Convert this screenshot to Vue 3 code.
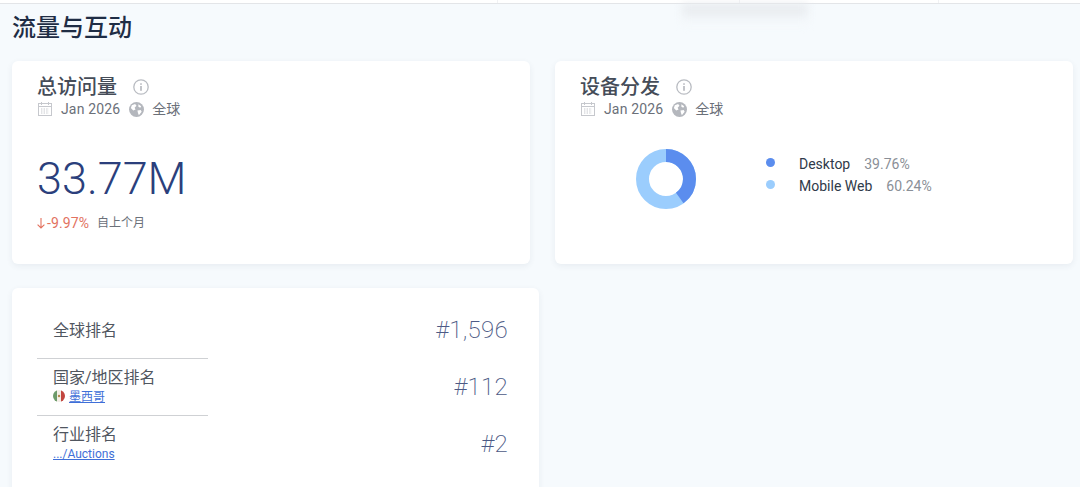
<script setup>
const cards = [
  { title: '总访问量' },
  { title: '设备分发' },
]
const ranks = [
  { label: '全球排名', value: '#1,596' },
  { label: '国家/地区排名', value: '#112', link: '墨西哥', flag: true },
  { label: '行业排名', value: '#2', link: '.../Auctions' },
]
const r = 23.5
const circ = 2 * Math.PI * r
const desktop = 39.76
const legend = [
  { name: 'Desktop', pct: '39.76%', color: '#5b8dee' },
  { name: 'Mobile Web', pct: '60.24%', color: '#9bcdfd' },
]
</script>

<template>
  <div class="page">
    <div class="topbar">
      <span style="width: 498px"></span>
      <span style="width: 242px"></span>
      <span style="width: 199px"></span>
    </div>
    <div class="smudge"></div>
    <h1 class="heading">流量与互动</h1>

    <div class="cards">
      <section v-for="(card, i) in cards" :key="card.title" class="card">
        <div class="title-row">
          <h2>{{ card.title }}</h2>
          <svg class="info" viewBox="0 0 16 16" width="16" height="16" fill="none">
            <circle cx="8" cy="8" r="7.2" stroke="#b9bcc2" stroke-width="1.3" />
            <rect x="7.3" y="7" width="1.4" height="4.8" fill="#a9acb3" />
            <rect x="7.3" y="4.3" width="1.4" height="1.5" fill="#a9acb3" />
          </svg>
        </div>
        <div class="meta">
          <svg class="cal" viewBox="0 0 14 14" width="14" height="14" fill="none">
            <rect x="0.5" y="1.5" width="13" height="12" stroke="#c6c8cd" />
            <path d="M1 4.5h12M3.5 0v3M10.5 0v3" stroke="#c6c8cd" />
            <path d="M3 7h8M3 9h8M3 11h8" stroke="#c6c8cd" stroke-dasharray="1.4 1.2" />
          </svg>
          <span class="date">Jan 2026</span>
          <svg class="globe" viewBox="0 0 16 16" width="15" height="15">
            <circle cx="8" cy="8" r="8" fill="#b4b7bd" />
            <path d="M3 3.5 6.5 2 8 4 6 6 7 8 4.5 9 2 6.5ZM9 9l3.5-.5 1 2-3 3.5-1-2.5ZM10 2.5l3 2-1 1.5-2-1Z" fill="#fff" />
          </svg>
          <span class="region">全球</span>
        </div>

        <div v-if="i === 0" class="visits">
          <div class="big">33.77M</div>
          <div class="change">
            <span class="down">
              <svg viewBox="0 0 8 11" width="8" height="11" fill="none">
                <path d="M4 0v10M0.6 6.6 4 10l3.4-3.4" stroke="#e2725f" stroke-width="1.1" />
              </svg>
              -9.97%
            </span>
            <span class="since">自上个月</span>
          </div>
        </div>

        <div v-else class="device">
          <svg class="donut" viewBox="0 0 60 60" width="60" height="60" fill="none">
            <circle cx="30" cy="30" :r="r" stroke="#9bcdfd" stroke-width="13" />
            <circle
              cx="30"
              cy="30"
              :r="r"
              stroke="#5b8dee"
              stroke-width="13"
              :stroke-dasharray="`${circ * desktop / 100} ${circ}`"
              transform="rotate(-90 30 30)"
            />
          </svg>
          <ul class="legend">
            <li v-for="item in legend" :key="item.name">
              <i :style="{ background: item.color }"></i>
              <span class="name">{{ item.name }}</span>
              <span class="pct">{{ item.pct }}</span>
            </li>
          </ul>
        </div>
      </section>
    </div>

    <section class="card rank-card">
      <div v-for="row in ranks" :key="row.label" class="rank-row">
        <div class="rank-left" :class="{ 'has-link': row.link }">
          <div class="rank-label">{{ row.label }}</div>
          <div v-if="row.link" class="rank-link">
            <svg v-if="row.flag" class="flag" viewBox="0 0 12 12" width="12" height="12">
              <clipPath id="flag-clip"><circle cx="6" cy="6" r="6" /></clipPath>
              <g clip-path="url(#flag-clip)">
                <rect width="4" height="12" fill="#6c9a6a" />
                <rect x="4" width="4" height="12" fill="#f3eee6" />
                <rect x="8" width="4" height="12" fill="#c2463f" />
                <circle cx="6" cy="6" r="1.2" fill="#b08a4a" />
              </g>
            </svg>
            <a href="#">{{ row.link }}</a>
          </div>
        </div>
        <div class="rank-value">{{ row.value }}</div>
      </div>
    </section>
  </div>
</template>

<style>
html,
body {
  margin: 0;
  background: #f6fafd;
  overflow: hidden;
}
</style>

<style scoped>
.page {
  position: relative;
  height: 487px;
  overflow: hidden;
  background: #f6fafd;
  font-family: Roboto, "Noto Sans CJK SC", sans-serif;
  color: #2f3a4a;
}

.topbar {
  display: flex;
  height: 3px;
  background: #fff;
  border-bottom: 1px solid #e3e5e8;
}

.topbar span {
  box-sizing: border-box;
  border-right: 1px solid #f1f2f4;
}

.smudge {
  position: absolute;
  left: 682px;
  top: 4px;
  width: 126px;
  height: 20px;
  background: linear-gradient(#e4e7eb, #f6fafd);
  filter: blur(4px);
}

.heading {
  position: relative;
  margin: 0;
  padding: 9px 0 0 12px;
  height: 48px;
  box-sizing: border-box;
  font-size: 24px;
  line-height: 30px;
  font-weight: 500;
  color: #1f2d45;
}

.cards {
  position: relative;
  display: grid;
  grid-template-columns: 518px 518px;
  gap: 25px;
  padding: 9px 0 0 12px;
}

.card {
  box-sizing: border-box;
  height: 203px;
  padding: 13px 25px 0;
  background: #fff;
  border-radius: 6px;
  box-shadow: 0 2px 6px rgba(40, 60, 90, 0.07);
}

.title-row {
  display: flex;
  align-items: center;
  gap: 16px;
  height: 26px;
}

.title-row h2 {
  margin: 0;
  font-size: 20px;
  line-height: 26px;
  font-weight: 500;
  color: #454c58;
}

.meta {
  display: flex;
  align-items: center;
  height: 18px;
  font-size: 14px;
  letter-spacing: 0.15px;
  color: #6b7079;
}

.cal {
  margin: 0 9px 0 1px;
}

.globe {
  margin: 0 8px 0 9px;
}

.region {
  margin-top: -2px;
}

.visits {
  padding-top: 34px;
}

.big {
  font-size: 45px;
  line-height: 54px;
  font-weight: 300;
  color: #2b3f7c;
}

.change {
  display: flex;
  align-items: center;
  gap: 8px;
  margin-top: 8px;
  font-size: 14px;
  line-height: 18px;
}

.down {
  display: flex;
  align-items: center;
  gap: 2px;
  letter-spacing: 0.1px;
  color: #e2725f;
}

.since {
  font-size: 12px;
  color: #6b7079;
}

.device {
  display: flex;
  align-items: flex-start;
  padding: 31px 0 0 56px;
}

.legend {
  margin: 4px 0 0 70px;
  padding: 0;
  list-style: none;
  font-size: 14px;
}

.legend li {
  display: flex;
  align-items: center;
  height: 22px;
}

.legend i {
  width: 9px;
  height: 9px;
  margin-right: 24px;
  margin-top: -4px;
  border-radius: 50%;
}

.name {
  color: #2f3a4a;
}

.pct {
  margin-left: 14px;
  color: #8a8f97;
}

.rank-card {
  width: 527px;
  height: 230px;
  margin: 24px 0 0 12px;
  padding: 14px 31px 0 25px;
}

.rank-row {
  display: flex;
  align-items: center;
  justify-content: space-between;
  height: 57px;
}

.rank-left {
  box-sizing: border-box;
  display: flex;
  flex-direction: column;
  justify-content: center;
  width: 171px;
  height: 57px;
  padding: 2px 0 0 16px;
  border-bottom: 1px solid #cfd1d4;
}

.rank-left.has-link {
  padding: 0 0 2px 16px;
}

.rank-row:last-child .rank-label {
  margin-top: -1px;
}

.rank-row:last-child .rank-left {
  border-bottom: 0;
}

.rank-label {
  font-size: 16px;
  line-height: 22px;
  color: #50565f;
}

.rank-link {
  display: flex;
  align-items: center;
  gap: 4px;
  font-size: 12px;
  line-height: 16px;
}

.flag {
  margin-bottom: 3px;
}

.rank-link a {
  color: #3f6fd8;
}

.rank-value {
  margin-top: -2px;
  font-size: 24px;
  font-weight: 200;
  letter-spacing: 0.3px;
  color: #4d5a85;
}
</style>
